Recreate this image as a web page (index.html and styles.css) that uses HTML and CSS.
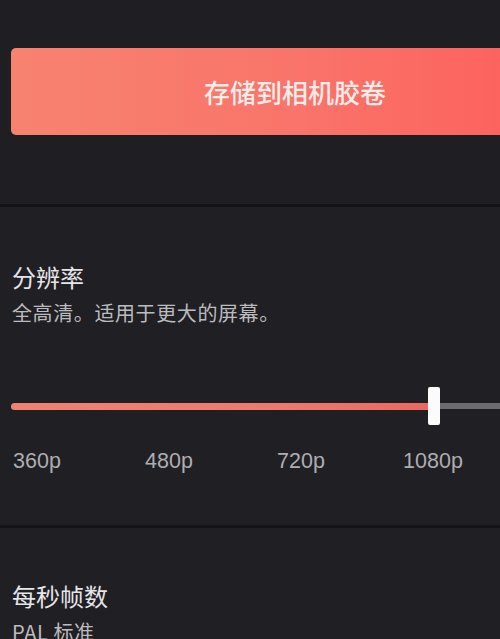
FILE: index.html
```html
<!DOCTYPE html>
<html lang="zh-CN">
<head>
<meta charset="utf-8">
<title>导出设置</title>
<link rel="stylesheet" href="styles.css">
</head>
<body>
<div class="page">
  <section class="save-section">
    <button class="save-btn">存储到相机胶卷</button>
  </section>
  <section class="setting resolution">
    <h2 class="title">分辨率</h2>
    <p class="desc">全高清。适用于更大的屏幕。</p>
    <div class="slider">
      <div class="track">
        <div class="fill"></div>
        <div class="rest"></div>
      </div>
      <div class="thumb"></div>
    </div>
    <div class="ticks">
      <span class="tick">360p</span>
      <span class="tick">480p</span>
      <span class="tick">720p</span>
      <span class="tick">1080p</span>
    </div>
  </section>
  <section class="setting fps">
    <h2 class="title">每秒帧数</h2>
    <p class="desc">PAL 标准</p>
  </section>
</div>
</body>
</html>
```
FILE: styles.css
```css
html, body {
  margin: 0;
  padding: 0;
  background: #1f1e22;
}
body {
  width: 500px;
  height: 639px;
  overflow: hidden;
  font-family: "Noto Sans CJK SC", "Noto Sans", sans-serif;
}
.page {
  display: flex;
  flex-direction: column;
}
.save-section {
  padding: 48px 0 69px 11px;
  height: 87px;
}
.save-btn {
  display: flex;
  align-items: center;
  justify-content: center;
  width: 568px;
  height: 87px;
  border: 0;
  border-radius: 5px;
  background: linear-gradient(90deg, #f7836f 0%, #f9746a 50%, #fe5d5b 100%);
  color: #f7ecea;
  font-family: "Noto Sans CJK SC", sans-serif;
  font-size: 26px;
  line-height: 26px;
  font-weight: 500;
  padding: 0;
  margin: 0;
}
.setting {
  border-top: 3px solid #141316;
  background: #201f23;
}
.resolution {
  padding: 58px 0 0 0;
  height: 260px;
}
.fps {
  padding: 56px 0 0 0;
  height: 120px;
}
.title {
  margin: 0 0 0 12px;
  font-size: 24px;
  line-height: 24px;
  font-weight: 400;
  color: #e6e5e8;
}
.desc {
  margin: 14px 0 0 12px;
  font-size: 20px;
  line-height: 20px;
  font-weight: 400;
  color: #bcbbbf;
  letter-spacing: 0.6px;
}
.slider {
  position: relative;
  margin: 64px 0 0 11px;
  height: 38px;
  display: flex;
  align-items: center;
}
.track {
  display: flex;
  align-items: center;
  width: 560px;
  flex: none;
}
.fill {
  width: 422px;
  height: 7px;
  border-radius: 4px 0 0 4px;
  background: linear-gradient(90deg, #f08272, #ee7a6d 60%, #e9695f);
}
.rest {
  flex: 1;
  height: 6px;
  background: #6c6b70;
}
.thumb {
  position: absolute;
  left: 417px;
  top: 0;
  width: 12px;
  height: 38px;
  border-radius: 2px;
  background: #fbfbfb;
}
.ticks {
  display: flex;
  margin: 26px 0 0 -29px;
}
.tick {
  width: 132px;
  flex: none;
  text-align: center;
  font-family: "Liberation Sans", Arial, sans-serif;
  font-size: 21.5px;
  line-height: 21.5px;
  color: #aeadb1;
}
```
